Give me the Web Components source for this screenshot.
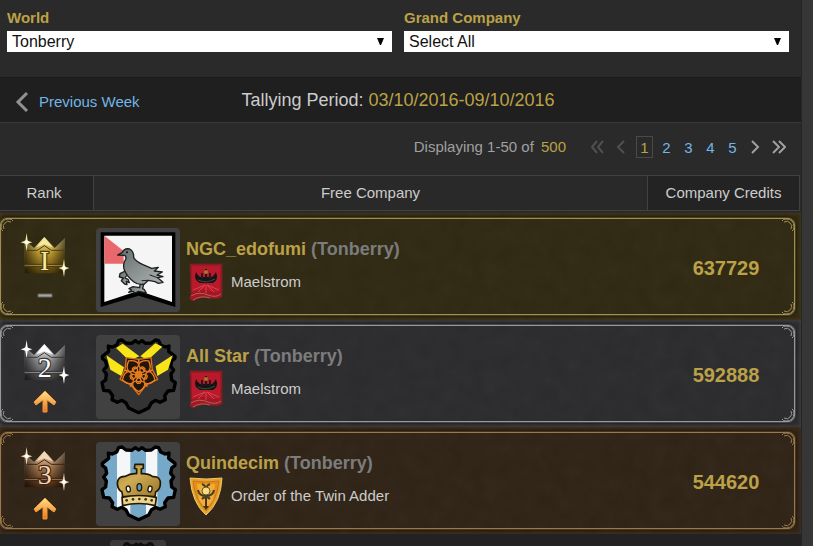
<!DOCTYPE html>
<html lang="en">
<head>
<meta charset="utf-8">
<title>Free Company Standings</title>
<style>
  html {
    background: #363636;
    scrollbar-width: none;
  }

  body {
    margin: 0;
    color: #ccc;
    font: 15px/20px "Liberation Sans", Arial, sans-serif;
    --gold: #bba147;
    --link: #71b6e6;
    --line: #414141;
  }
</style>
</head>
<body>
<standings-page>
  <filter-bar slot="filters">
    <filter-select label="World" value="Tonberry"></filter-select>
    <filter-select label="Grand Company" value="Select All"></filter-select>
  </filter-bar>
  <week-bar slot="week" period="03/10/2016-09/10/2016">Previous Week</week-bar>
  <page-nav slot="pager" range="1-50" total="500" pages="5"></page-nav>
  <company-ranking></company-ranking>
</standings-page>

<script>
// the crest outline is symmetrical, so only its right half is listed
const half = [[140, 38], [150, 31], [161, 39], [178, 38], [190, 29], [200, 31],
  [206, 44], [219, 50], [231, 47], [230, 63], [249, 78], [249, 84], [239, 92], [236, 108],
  [245, 119], [237, 131], [239, 149], [250, 157], [245, 180], [228, 182],
  [218, 196], [220, 208], [204, 216], [190, 210], [178, 218], [170, 233], [140, 247]];
const outline = 'M' + half.concat(half.slice(1, -1).reverse().map(([x, y]) => [280 - x, y])).join('L') + 'Z';

const petals = shape => [0, 72, 144, 216, 288]
  .map(a => `<g transform="rotate(${a} 140 133)">${shape}</g>`).join('');

const crests = {
  raven: `
    <path d="M26 27H250V251L140 217L26 251Z" fill="#000"/>
    <path d="M37 37H240V236L140 202L37 236Z" fill="#f5f5f5"/>
    <path d="M37 37L95 83V121H37Z" fill="#e8686c"/>
    <g fill="url(#silver)" stroke="#1d2121" stroke-width="4" stroke-linejoin="round" stroke-linecap="round">
      <path d="M100 143L84 151L82 161L94 164L88 172L98 182L105 184L103 174L112 178L108 168L99 164L103 158L120 151Z"/>
      <path d="M145 178L143 193L123 190L111 196L119 200L110 207L124 204L128 209L140 204L163 209L157 199L152 196L156 178Z"/>
      <path d="M77 95L91 87Q98 73 113 77Q126 84 125 103Q133 116 153 124L179 135L199 132L187 143L211 146L195 155L213 160L197 163L213 177L199 180L189 175L169 171L157 182Q139 186 125 175Q106 161 97 140Q91 121 101 108Q104 100 98 96Z"/>
      <path d="M174 155L196 163M150 172L168 171" fill="none" stroke-width="3"/>
    </g>
    <circle cx="105" cy="87" r="3" fill="#111"/>`,
  rose: `
    <path d="${outline}" fill="#333" stroke="#000" stroke-width="10" stroke-linejoin="round"/>
    <g fill="#f7e51a">
      <path d="M72 53L92 40L142 78L112 91Z"/><path d="M190 39L211 49L168 89L145 78Z"/>
      <path d="M43 75L96 111L88 137L55 118Z"/><path d="M242 75L191 108L196 137L228 118Z"/>
    </g>
    <path d="M103 82L140 87L177 82L181 118L197 147L162 164L140 193L117 164L84 147L99 118Z" fill="#21150c" stroke="#e2701a" stroke-width="4" stroke-linejoin="round"/>
    <g transform="rotate(180 140 133)" fill="none" stroke="url(#fire)" stroke-width="4">
      ${petals('<path d="M122 109Q119 93 140 82Q161 93 158 109Q147 117 140 111Q133 117 122 109Z"/>')}
      ${petals('<path d="M140 125Q127 115 136 107H144Q153 115 140 125Z"/>')}
      ${petals('<path d="M118 106L115 97M162 106L165 97"/>')}
      <circle cx="140" cy="133" r="9" fill="#e27618"/>
    </g>`,
  crown: `
    <clipPath id="c"><path d="${outline}"/></clipPath>
    <g clip-path="url(#c)">
      <path d="M20 20H260V260H20Z" fill="#75a9c7"/>
      <path d="M75 20H115V260H75ZM162 20H196V260H162Z" fill="#f4f6f8"/>
    </g>
    <path d="${outline}" fill="none" stroke="#000" stroke-width="10" stroke-linejoin="round"/>
    <g stroke="#211908" stroke-width="5" stroke-linejoin="round">
      <path d="M129 81H154V93L148 95V109Q169 108 182 118Q207 116 205 141Q204 157 191 164L189 178H92L90 164Q77 157 76 138Q77 116 100 117Q115 107 134 109V95L127 93Z" fill="url(#gold)"/>
      <path d="M90 180Q140 169 193 180L190 205Q140 192 92 205Z" fill="#ecd28a"/>
      <g fill="#fff" stroke-width="4">
        <ellipse cx="109" cy="155" rx="6" ry="9" transform="rotate(-12 109 155)"/>
        <ellipse cx="142" cy="150" rx="7" ry="11" fill="#579bc4"/>
        <ellipse cx="174" cy="155" rx="6" ry="9" transform="rotate(12 174 155)"/>
      </g>
    </g>
    <g fill="#3b2d12"><circle cx="104" cy="189" r="4"/><circle cx="123" cy="186" r="4"/><circle cx="142" cy="185" r="4"/><circle cx="161" cy="186" r="4"/><circle cx="179" cy="189" r="4"/></g>`,
  plain: `<path d="${outline}" fill="#24252a" stroke="#090a0c" stroke-width="12" stroke-linejoin="round"/>`
};

const emblems = {
  'Maelstrom': `
    <path d="M2 2H34V35Q29 38 22 36Q12 34 5 39Q0 37 3 33Z" fill="#a11726" stroke="#6a2420"/>
    <path d="M3 34Q11 29 20 33Q28 36 33 32M5 38Q13 33 22 36" fill="none" stroke="#b8604f"/>
    <path d="M4 4H32V29Q26 32 19 28Q10 27 4 30Z" fill="#b81a2b"/>
    <path d="M17 23L5 28M17 23L10 30M18 23V31M19 23L26 30M19 23L31 28" stroke="#d8444a"/>
    <path d="M8 10Q10 14 12 15H24Q26 14 28 10Q31 18 25 21H12Q5 18 8 10Z" fill="#171315"/>
    <path d="M18 7V16M14 11V17M22 11V17" stroke="#231719" stroke-width="2"/>
    <path d="M10 18Q18 22 27 17" fill="none" stroke="#2f5142"/>
    <circle cx="18" cy="10" r="2" fill="#a9752f"/>`,
  'Order of the Twin Adder': `
    <path d="M2 2Q18 4 34 2Q33 26 18 39Q4 27 2 2Z" fill="#e7a22b" stroke="#f4c96d"/>
    <path d="M5 5Q18 7 31 5Q29 24 18 35Q7 24 5 5Z" fill="#e98d17" stroke="#c27a1c"/>
    <path d="M9 8H27L25 24L18 33L11 24Z" fill="#f0ad3c"/>
    <path d="M18 12V32" stroke="#4b3418" stroke-width="2"/>
    <path d="M14 8Q17 9 18 12Q19 9 22 8" fill="none" stroke="#433f22" stroke-width="2"/>
    <path d="M10 14Q11 20 18 20Q25 20 26 14M14 23Q18 19 22 23" fill="none" stroke="#433f22" stroke-width="2"/>
    <path d="M15 30H21L18 34Z" fill="#3d3319"/>
    <circle cx="18" cy="15" r="4" fill="#f7dc80" stroke="#6b5523"/>`
};

const metals = {
  gold: ['#f6e9a0', '#b9962f', '#4d3b0b'],
  silver: ['#ffffff', '#929292', '#383838'],
  bronze: ['#f3d8b8', '#a3774f', '#41240f']
};

const companies = [
  {rank: 'I', metal: 'gold', move: 'same', crest: 'raven', name: 'NGC_edofumi', world: 'Tonberry', company: 'Maelstrom', credits: 637729},
  {rank: '2', metal: 'silver', move: 'up', crest: 'rose', name: 'All Star', world: 'Tonberry', company: 'Maelstrom', credits: 592888},
  {rank: '3', metal: 'bronze', move: 'up', crest: 'crown', name: 'Quindecim', world: 'Tonberry', company: 'Order of the Twin Adder', credits: 544620}
];

class StandingsPage extends HTMLElement {
  constructor() {
    super();
    this.attachShadow({mode: 'open'}).innerHTML = `
      <style>
        :host {
          background: #2a2a2a;
          border-right: 1px solid #252525;
          display: block;
          margin-right: 11px;
          min-height: 100vh;
        }
      </style>
      <slot name="filters"></slot>
      <slot name="week"></slot>
      <slot name="pager"></slot>
      <main><slot></slot></main>
    `;
  }
}
customElements.define('standings-page', StandingsPage);

class FilterBar extends HTMLElement {
  constructor() {
    super();
    this.attachShadow({mode: 'open'}).innerHTML = `
      <style>
        :host {
          display: grid;
          gap: 12px;
          grid-template-columns: 1fr 1fr;
          padding: 8px 12px 25px 7px;
        }
      </style>
      <slot></slot>
    `;
  }
}
customElements.define('filter-bar', FilterBar);

class FilterSelect extends HTMLElement {
  constructor() {
    super();
    this.attachShadow({mode: 'open'}).innerHTML = `
      <style>
        :host { display: block; }

        label {
          color: var(--gold);
          display: block;
          font-weight: bold;
          padding-bottom: 3px;
        }

        .box { display: grid; }

        select, svg { grid-area: 1 / 1; }

        select {
          appearance: none;
          background: #fff;
          border: 0;
          border-radius: 0;
          color: #111;
          font: 16px/21px "Liberation Sans", Arial, sans-serif;
          height: 21px;
          padding: 0 24px 0 5px;
        }

        svg {
          align-self: center;
          justify-self: end;
          margin-right: 8px;
          pointer-events: none;
        }
      </style>
      <label for="field">${this.getAttribute('label')}</label>
      <div class="box">
        <select id="field"><option>${this.getAttribute('value')}</option></select>
        <svg width="7" height="7"><path d="M0 0H7L4 7H3Z"/></svg>
      </div>
    `;
  }
}
customElements.define('filter-select', FilterSelect);

class WeekBar extends HTMLElement {
  constructor() {
    super();
    this.attachShadow({mode: 'open'}).innerHTML = `
      <style>
        :host {
          align-items: center;
          background: #1f1f1f;
          border-bottom: 1px solid #383838;
          border-top: 1px solid #1b1b1b;
          display: grid;
          grid-template-columns: 1fr auto 1fr;
          height: 44px;
          padding: 0 20px 0 15px;
        }

        a {
          align-items: center;
          color: var(--link);
          display: flex;
          gap: 10px;
          padding-top: 4px;
          text-decoration: none;
        }

        p {
          font-size: 18px;
          margin: 0;
        }

        span { color: var(--gold); }
      </style>
      <a href="#previous">
        <svg width="14" height="22" fill="none" stroke="#929292" stroke-width="3"><path d="M12 2L3 11L12 20"/></svg>
        <slot></slot>
      </a>
      <p>Tallying Period: <span>${this.getAttribute('period')}</span></p>
    `;
  }
}
customElements.define('week-bar', WeekBar);

class PageNav extends HTMLElement {
  constructor() {
    super();
    const count = Number(this.getAttribute('pages'));
    let links = '';
    for (let i = 1; i <= count; i++) {
      links += `<a href="#page${i}"${i === 1 ? ' aria-current="page"' : ''}>${i}</a>`;
    }
    this.attachShadow({mode: 'open'}).innerHTML = `
      <style>
        :host {
          align-items: center;
          color: #a0a0a0;
          display: flex;
          gap: 19px;
          justify-content: flex-end;
          padding: 13px 10px 17px;
        }

        b {
          color: var(--gold);
          font-weight: normal;
          margin-left: 3px;
        }

        nav { display: flex; }

        a {
          border: 1px solid transparent;
          box-sizing: border-box;
          color: var(--link);
          height: 22px;
          line-height: 22px;
          margin: 0 2px 0 3px;
          text-align: center;
          text-decoration: none;
          width: 17px;
        }

        a[aria-current] {
          border-color: #4a4a4a;
          color: var(--gold);
        }

        button {
          background: none;
          border: 0;
          height: 22px;
          padding: 0;
          width: 24px;
        }

        svg {
          display: block;
          fill: none;
          margin: auto;
          stroke: #a0a0a0;
          stroke-width: 2;
        }

        :disabled svg { stroke: #505050; }
      </style>
      <span>Displaying ${this.getAttribute('range')} of <b>${this.getAttribute('total')}</b></span>
      <nav aria-label="Pages">
        <button disabled aria-label="First"><svg width="14" height="16"><path d="M7 2L2 8L7 14M13 2L8 8L13 14"/></svg></button>
        <button disabled aria-label="Previous"><svg width="10" height="16"><path d="M8 2L2 8L8 14"/></svg></button>
        ${links}
        <button aria-label="Next"><svg width="10" height="16"><path d="M2 2L8 8L2 14"/></svg></button>
        <button aria-label="Last"><svg width="14" height="16"><path d="M1 2L7 8L1 14M7 2L13 8L7 14"/></svg></button>
      </nav>
    `;
  }
}
customElements.define('page-nav', PageNav);

class RankBadge extends HTMLElement {
  connectedCallback() {
    const [light, mid, dark] = metals[this.getAttribute('metal')];
    const move = this.getAttribute('move') === 'up'
      ? '<path d="M12 1L23 12L21 15L14 10V22H10V10L3 15L1 12Z" fill="url(#up)" stroke="#f09a35"/>'
      : '<path d="M5 11H19V14H5Z" fill="#a5a5a5" stroke="#666"/>';
    this.attachShadow({mode: 'open'}).innerHTML = `
      <style>
        :host {
          align-items: center;
          display: flex;
          flex-direction: column;
          gap: 6px;
        }

        svg { display: block; }

        text { font: 84px "Liberation Serif", serif; }
      </style>
      <svg width="50" height="46" viewBox="58 64 150 138">
        <defs>
          <linearGradient id="m" x2="0" y2="1">
            <stop stop-color="${light}"/><stop offset=".45" stop-color="${mid}"/><stop offset="1" stop-color="${dark}"/>
          </linearGradient>
          <linearGradient id="side">
            <stop stop-color="#000" stop-opacity=".6"/><stop offset=".35" stop-opacity="0"/><stop offset=".65" stop-opacity="0"/><stop offset="1" stop-color="#000" stop-opacity=".6"/>
          </linearGradient>
        </defs>
        <path d="M72 90L100 115L131 82L162 115L193 86V191H72Z" fill="url(#m)"/>
        <path d="M72 90L100 115L131 82L162 115L193 86V191H72Z" fill="url(#side)"/>
        <path d="M107 113L131 84L156 113L131 104Z" fill="${light}"/>
        <path d="M72 122H110L131 108L152 122H193M72 164H193M72 171H193" fill="none" stroke="${dark}" stroke-width="3"/>
        <path d="M72 168H193" stroke="${light}" stroke-width="2" opacity=".6"/>
        <text x="132" y="181" text-anchor="middle" fill="${light}" stroke="${dark}" stroke-width="7" paint-order="stroke">${this.getAttribute('rank')}</text>
        <g fill="${light}">
          <path d="M78 70L81 93L95 98L81 102L78 125L74 102L60 98L74 93Z"/>
          <path d="M190 147L193 171L206 175L193 180L190 202L186 180L174 175L186 171Z"/>
        </g>
        <g fill="#fff"><circle cx="78" cy="98" r="6"/><circle cx="190" cy="175" r="6"/></g>
      </svg>
      <svg width="24" height="24">
        <defs><linearGradient id="up" x2="0" y2="1"><stop stop-color="#ffe28b"/><stop offset="1" stop-color="#ee741b"/></linearGradient></defs>
        ${move}
      </svg>
    `;
  }
}
customElements.define('rank-badge', RankBadge);

class CompanyCrest extends HTMLElement {
  connectedCallback() {
    this.attachShadow({mode: 'open'}).innerHTML = `
      <style>
        :host {
          background: #414141;
          border-radius: 4px;
          display: block;
          height: var(--crest-size, 84px);
          width: var(--crest-size, 84px);
        }

        svg { display: block; }
      </style>
      <svg width="100%" height="100%" viewBox="12 14 252 252">
        <defs>
          <linearGradient id="silver" x2="1" y2="1"><stop stop-color="#646c6d"/><stop offset="1" stop-color="#adb3b1"/></linearGradient>
          <linearGradient id="gold" x2="1" y2="1"><stop stop-color="#a58634"/><stop offset=".4" stop-color="#cfac54"/><stop offset="1" stop-color="#987425"/></linearGradient>
          <radialGradient id="fire"><stop stop-color="#f6b638"/><stop offset="1" stop-color="#e8791c"/></radialGradient>
        </defs>
        ${crests[this.getAttribute('name')]}
      </svg>
    `;
  }
}
customElements.define('company-crest', CompanyCrest);

// ornamental border and leather grain behind one row
class RowFrame extends HTMLElement {
  connectedCallback() {
    const corner = '<svg width="14" height="14"><path d="M13 3Q12 1 9 1Q1 1 1 9Q1 12 3 13M11 4Q7 2 5 5Q2 7 4 11"/></svg>';
    this.attachShadow({mode: 'open'}).innerHTML = `
      <style>
        :host {
          box-shadow: inset 0 0 4px var(--edge);
          display: block;
          inset: 0;
          position: absolute;
          z-index: -1;
        }

        .grain {
          display: block;
          height: 100%;
          opacity: .04;
          width: 100%;
        }

        .line {
          border: 1px solid var(--frame);
          border-radius: 7px;
          box-shadow: 0 0 0 1px var(--edge), 0 0 3px 1px #0008;
          inset: 5px 6px 5px 0;
          position: absolute;
        }

        .line svg {
          fill: none;
          position: absolute;
          stroke: var(--frame);
        }

        .line svg:nth-child(1) { left: -1px; top: -1px; }
        .line svg:nth-child(2) { right: -1px; top: -1px; transform: scaleX(-1); }
        .line svg:nth-child(3) { bottom: -1px; left: -1px; transform: scaleY(-1); }
        .line svg:nth-child(4) { bottom: -1px; right: -1px; transform: scale(-1); }
        .line path { stroke-width: 1px; }
      </style>
      <svg class="grain">
        <filter id="n"><feTurbulence type="fractalNoise" baseFrequency=".06" numOctaves="4"/><feColorMatrix type="saturate" values="0"/></filter>
        <rect width="100%" height="100%" filter="url(#n)"/>
      </svg>
      <div class="line">${corner.repeat(4)}</div>
    `;
  }
}
customElements.define('row-frame', RowFrame);

class CompanyRanking extends HTMLElement {
  constructor() {
    super();
    const rows = companies.map(c => `
      <tr class="${c.metal}">
        <td><row-frame></row-frame><rank-badge rank="${c.rank}" metal="${c.metal}" move="${c.move}"></rank-badge></td>
        <td>
          <div class="company">
            <company-crest name="${c.crest}"></company-crest>
            <div>
              <h2>${c.name} <small>(${c.world})</small></h2>
              <div class="grand">
                <svg width="36" height="40">${emblems[c.company]}</svg>
                <span>${c.company}</span>
              </div>
            </div>
          </div>
        </td>
        <td class="credits">${c.credits}</td>
      </tr>`).join('');
    this.attachShadow({mode: 'open'}).innerHTML = `
      <style>
        :host {
          display: block;
          overflow: hidden;
        }

        table {
          border-collapse: collapse;
          table-layout: fixed;
          width: 100%;
        }

        th, td { padding: 0; }

        th {
          font-weight: normal;
          padding-bottom: 2px;
        }

        th span {
          background: #232323;
          border: solid var(--line);
          border-width: 1px 1px 1px 0;
          display: block;
          line-height: 34px;
        }

        th:first-child { width: 94px; }
        th:first-child span { padding-right: 5px; }
        th:nth-child(2) span { background: #292929; }

        th:last-child {
          padding-right: 1px;
          width: 152px;
        }

        tbody tr {
          background: var(--row);
          height: 107px;
          isolation: isolate;
          position: relative;
        }

        td { vertical-align: top; }

        .gold { --row: #2f2812; --edge: #4a3d19; --frame: #a08e54; }
        .silver { --row: #2b2b2d; --edge: #48484b; --frame: #97989c; }
        .bronze { --row: #2f2316; --edge: #49331e; --frame: #9b794c; }

        rank-badge { padding: 18px 5px 0 0; }

        .company {
          display: flex;
          gap: 6px;
          padding: 15px 2px 0;
        }

        h2 {
          color: var(--gold);
          font-size: 18px;
          line-height: 20px;
          margin: 11px 0 3px;
        }

        small {
          color: #7c7c7c;
          font-size: 18px;
        }

        .grand {
          align-items: center;
          display: flex;
          gap: 7px;
          padding-left: 2px;
        }

        .credits {
          color: var(--gold);
          font-size: 20px;
          font-weight: bold;
          padding: 2px 0 0 3px;
          text-align: center;
          vertical-align: middle;
        }

        tbody tr.rest {
          background: #222;
          height: 74px;
        }

        .rest company-crest {
          --crest-size: 56px;
          margin: 6px 0 0 16px;
          opacity: .8;
        }
      </style>
      <table>
        <thead>
          <tr><th><span>Rank</span></th><th><span>Free Company</span></th><th><span>Company Credits</span></th></tr>
        </thead>
        <tbody>
          ${rows}
          <tr class="rest"><td></td><td><company-crest name="plain"></company-crest></td><td></td></tr>
        </tbody>
      </table>
    `;
  }
}
customElements.define('company-ranking', CompanyRanking);
</script>
</body>
</html>
